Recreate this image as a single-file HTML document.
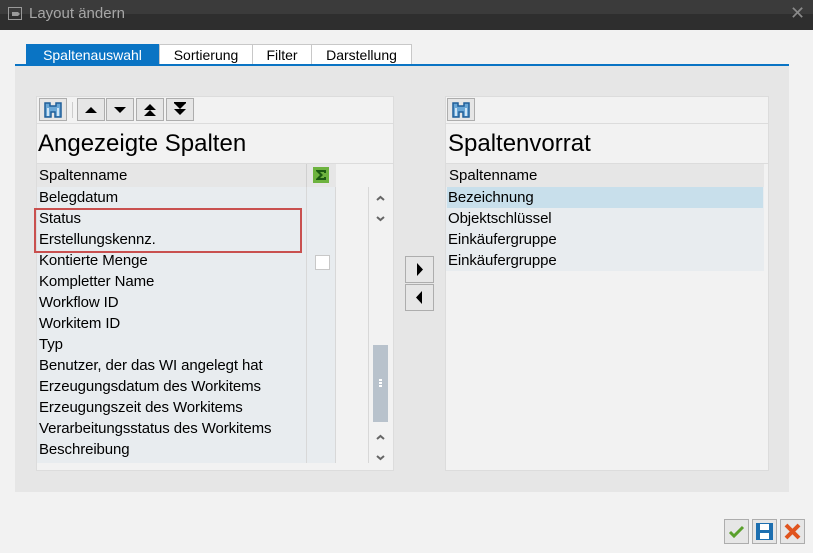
<!DOCTYPE html>
<html><head><meta charset="utf-8"><style>
*{margin:0;padding:0;box-sizing:border-box}
body{width:813px;height:553px;background:#f2f2f2;font-family:"Liberation Sans",Tahoma,sans-serif;position:relative;overflow:hidden;font-size:14px;color:#000}
.a{position:absolute}
.row{position:absolute;left:2px;height:21px;line-height:21px;font-size:15px;letter-spacing:-0.1px}
.btn{position:absolute;background:#e6e6e6;border:1px solid #adadad}
</style></head><body>
<div class="a" style="left:0;top:0;width:813px;height:30px;background:#2e2e2e"></div>
<div class="a" style="left:0;top:0;width:813px;height:14px;background:#3b3b3b"></div>
<svg class="a" style="left:8px;top:7px" width="16" height="14"><rect x="0.5" y="0.5" width="13" height="12" fill="none" stroke="#9a9a9a"/><path d="M4 5h6l2 2-2 2H4z" fill="#9a9a9a"/></svg>
<div class="a" style="left:29px;top:5px;color:#a6a6a6;font-size:15px">Layout ändern</div>
<div class="a" style="left:790px;top:3px;color:#8a8a8a;font-size:18px">✕</div>

<div class="a" style="left:26px;top:44px;width:133px;height:22px;background:#0a74c4;color:#fff;font-size:14px;line-height:22px;text-align:center">Spaltenauswahl</div>
<div class="a" style="left:159px;top:44px;width:94px;height:22px;background:#fff;border:1px solid #c8c8c8;border-bottom:none;line-height:21px;text-align:center">Sortierung</div>
<div class="a" style="left:252px;top:44px;width:60px;height:22px;background:#fff;border:1px solid #c8c8c8;border-bottom:none;line-height:21px;text-align:center">Filter</div>
<div class="a" style="left:311px;top:44px;width:101px;height:22px;background:#fff;border:1px solid #c8c8c8;border-bottom:none;line-height:21px;text-align:center">Darstellung</div>
<div class="a" style="left:15px;top:64px;width:774px;height:2px;background:#0a74c4"></div>
<div class="a" style="left:15px;top:66px;width:774px;height:426px;background:#e6e6e6"></div>

<div class="a" style="left:36px;top:96px;width:358px;height:375px;background:#f2f2f2;border:1px solid #dcdcdc">
 <div class="a" style="left:0;top:26px;width:356px;height:1px;background:#dcdcdc"></div>
 <div class="a" style="left:2px;top:1px;width:28px;height:23px;background:#e6e6e6;border:1px solid #adadad"></div>
 <svg class="a" style="left:5px;top:3px" width="22" height="19" viewBox="0 0 22 19"><path d="M3 3h5v3h6V3h5v14h-6v-5h-4v5H3z" fill="#6aa7d6" stroke="#1f5f99" stroke-width="1.5"/><path d="M5 8h2v8H5zM15 8h2v8h-2z" fill="#cfe4f5"/></svg>
 <div class="a" style="left:35px;top:5px;width:1px;height:16px;background:#ccc"></div>
 <div class="btn" style="left:40px;top:1px;width:28px;height:23px"><svg width="26" height="21"><path d="M7 14h12l-6-6z"/></svg></div>
 <div class="btn" style="left:69px;top:1px;width:28px;height:23px"><svg width="26" height="21"><path d="M7 8h12l-6 6z"/></svg></div>
 <div class="btn" style="left:99px;top:1px;width:28px;height:23px"><svg width="26" height="21"><path d="M7 11h12l-6-6zM7 17h12l-6-6z"/></svg></div>
 <div class="btn" style="left:129px;top:1px;width:28px;height:23px"><svg width="26" height="21"><path d="M7 4h12l-6 6zM7 10h12l-6 6z"/><rect x="7" y="3" width="12" height="1.5"/></svg></div>
 <div class="a" style="left:1px;top:33px;font-size:24px">Angezeigte Spalten</div>
 <div class="a" style="left:0;top:66px;width:356px;height:1px;background:#dcdcdc"></div>
 <div class="a" style="left:0;top:67px;width:269px;height:23px;background:#e6e6e6"></div>
 <div class="a" style="left:269px;top:67px;width:30px;height:23px;background:#e6e6e6;border-left:1px solid #d0d0d0"></div>
 <svg class="a" style="left:276px;top:70px" width="16" height="16"><rect width="16" height="16" fill="#6db33f"/><path d="M3 3h10v3h-2V5H7l3 3-3 3h4v-1h2v3H3v-1l4-4-4-4z" fill="#1c5a12"/></svg>
 <div class="a" style="left:2px;top:67px;line-height:23px;font-size:15px">Spaltenname</div>
 <div class="a" style="left:0;top:90px;width:269px;height:276px;background:#e8ecef"></div>
 <div class="a" style="left:269px;top:90px;width:30px;height:276px;background:#e8ecef;border-left:1px solid #d8d8d8;border-right:1px solid #d8d8d8"></div>
 <div class="a" style="left:278px;top:158px;width:15px;height:15px;background:#fff;border:1px solid #c8c8c8"></div>
 <div class="row" style="top:90px">Belegdatum</div>
 <div class="row" style="top:111px">Status</div>
 <div class="row" style="top:132px">Erstellungskennz.</div>
 <div class="row" style="top:153px">Kontierte Menge</div>
 <div class="row" style="top:174px">Kompletter Name</div>
 <div class="row" style="top:195px">Workflow ID</div>
 <div class="row" style="top:216px">Workitem ID</div>
 <div class="row" style="top:237px">Typ</div>
 <div class="row" style="top:258px">Benutzer, der das WI angelegt hat</div>
 <div class="row" style="top:279px">Erzeugungsdatum des Workitems</div>
 <div class="row" style="top:300px">Erzeugungszeit des Workitems</div>
 <div class="row" style="top:321px">Verarbeitungsstatus des Workitems</div>
 <div class="row" style="top:342px">Beschreibung</div>
 <div class="a" style="left:-3px;top:111px;width:268px;height:45px;border:2px solid #c9504f"></div>
 <div class="a" style="left:331px;top:90px;width:1px;height:276px;background:#d8d8d8"></div>
 <div class="a" style="left:336px;top:248px;width:15px;height:77px;background:#b8c2cc"></div>
 <div class="a" style="left:342px;top:282px;width:3px;height:8px;border-top:2px solid #fff;border-bottom:2px solid #fff;background:linear-gradient(#b8c2cc 1px,#fff 1px,#fff 3px,#b8c2cc 3px)"></div>
 <svg class="a" style="left:336px;top:95px" width="15" height="34" fill="none" stroke="#666" stroke-width="2"><path d="M4 8l3.5-3 3.5 3M4 25l3.5 3 3.5-3"/></svg>
 <svg class="a" style="left:336px;top:334px" width="15" height="34" fill="none" stroke="#666" stroke-width="2"><path d="M4 8l3.5-3 3.5 3M4 25l3.5 3 3.5-3"/></svg>
</div>

<div class="btn" style="left:405px;top:256px;width:29px;height:27px"><svg width="27" height="25"><path d="M11 6v13l6-6.5z"/></svg></div>
<div class="btn" style="left:405px;top:284px;width:29px;height:27px"><svg width="27" height="25"><path d="M16 6v13l-6-6.5z"/></svg></div>

<div class="a" style="left:445px;top:96px;width:324px;height:375px;background:#f2f2f2;border:1px solid #dcdcdc">
 <div class="a" style="left:0;top:26px;width:322px;height:1px;background:#dcdcdc"></div>
 <div class="a" style="left:1px;top:1px;width:28px;height:23px;background:#e6e6e6;border:1px solid #adadad"></div>
 <svg class="a" style="left:4px;top:3px" width="22" height="19" viewBox="0 0 22 19"><path d="M3 3h5v3h6V3h5v14h-6v-5h-4v5H3z" fill="#6aa7d6" stroke="#1f5f99" stroke-width="1.5"/><path d="M5 8h2v8H5zM15 8h2v8h-2z" fill="#cfe4f5"/></svg>
 <div class="a" style="left:2px;top:33px;font-size:24px">Spaltenvorrat</div>
 <div class="a" style="left:0;top:66px;width:322px;height:1px;background:#dcdcdc"></div>
 <div class="a" style="left:0;top:67px;width:318px;height:23px;background:#e6e6e6;line-height:23px;padding-left:3px;font-size:15px">Spaltenname</div>
 <div class="a" style="left:0;top:90px;width:318px;height:84px;background:#e8ecef"></div>
 <div class="a" style="left:1px;top:90px;width:316px;height:21px;background:#c8dfeb"></div>
 <div class="row" style="top:90px">Bezeichnung</div>
 <div class="row" style="top:111px">Objektschlüssel</div>
 <div class="row" style="top:132px">Einkäufergruppe</div>
 <div class="row" style="top:153px">Einkäufergruppe</div>
</div>

<div class="btn" style="left:724px;top:519px;width:25px;height:25px"><svg width="23" height="23"><path d="M5 12l4 4 9-9" fill="none" stroke="#5aa02c" stroke-width="3"/></svg></div>
<div class="btn" style="left:752px;top:519px;width:25px;height:25px"><svg width="23" height="23"><rect x="3" y="3" width="17" height="17" fill="#1d6fb0"/><rect x="7" y="4" width="9" height="6" fill="#fff"/><rect x="7" y="13" width="9" height="6" fill="#fff"/></svg></div>
<div class="btn" style="left:780px;top:519px;width:25px;height:25px"><svg width="23" height="23"><path d="M5 5l13 13M18 5L5 18" stroke="#e0541e" stroke-width="4"/></svg></div>
</body></html>
